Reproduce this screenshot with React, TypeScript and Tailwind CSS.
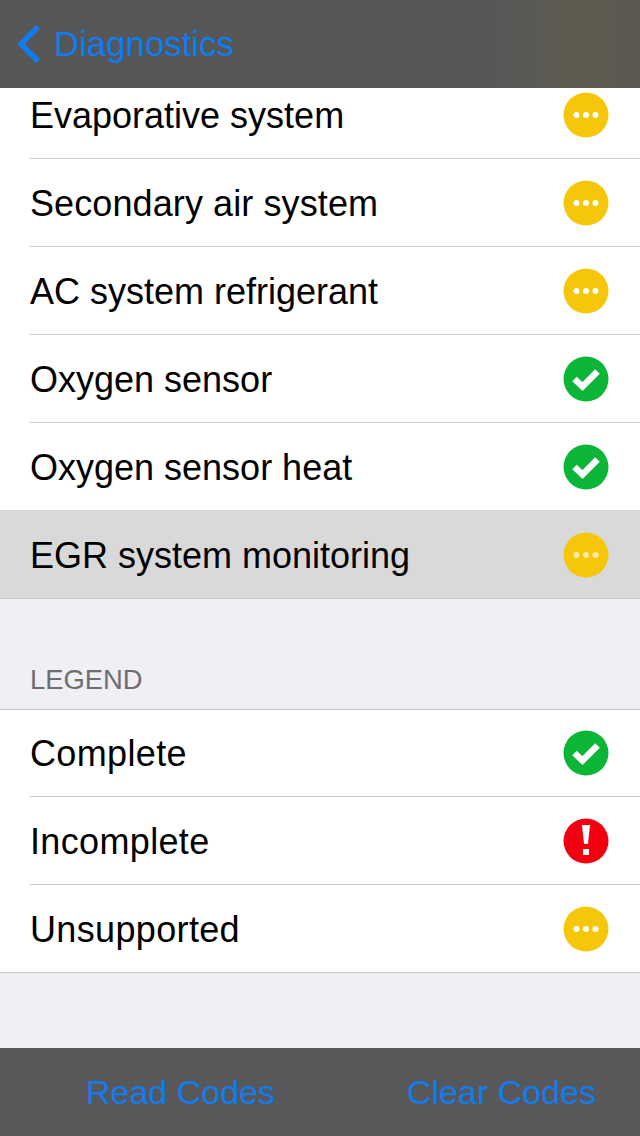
const FONT = "font-['Liberation_Sans',Arial,sans-serif]";

type Status = "complete" | "incomplete" | "unsupported";

function StatusIcon({ status, dim }: { status: Status; dim?: boolean }) {
  if (status === "complete")
    return (
      <svg width="46" height="46" viewBox="0 0 46 46" aria-hidden>
        <circle cx="23" cy="23" r="22.5" fill="#0bb536" />
        <path d="M11.5 23 L19.5 30.5 L34.5 15.5" fill="none" stroke="#fff" strokeWidth="6.5" />
      </svg>
    );
  if (status === "incomplete")
    return (
      <svg width="46" height="46" viewBox="0 0 46 46" aria-hidden>
        <circle cx="23" cy="23" r="22.5" fill="#f2000f" />
        <path d="M19 7 H27 L25 26 H21 Z" fill="#fff" />
        <rect x="20" y="31" width="6" height="6" fill="#fff" />
      </svg>
    );
  return (
    <svg width="46" height="46" viewBox="0 0 46 46" aria-hidden>
      <circle cx="23" cy="23" r="22.5" fill="#f5c60a" />
      <g fill="#fff" opacity={dim ? 0.65 : 1}>
        <circle cx="13.5" cy="23" r="3" />
        <circle cx="23" cy="23" r="3" />
        <circle cx="32.5" cy="23" r="3" />
      </g>
    </svg>
  );
}

function Row({
  label,
  status,
  size,
  tracking = "",
  plain,
  selected,
}: {
  label: string;
  status: Status;
  size: string;
  tracking?: string;
  plain?: boolean;
  selected?: boolean;
}) {
  return (
    <div className={selected ? "bg-[#d9d9d9]" : "bg-white"}>
      <div
        className={`flex items-center justify-between pr-[31px] ${size} ${
          plain ? "pl-[30px]" : "ml-[30px] border-b border-[#c8c7cc]"
        }`}
      >
        <span className={`pt-[2px] text-[36px] leading-none text-black ${tracking}`}>{label}</span>
        <StatusIcon status={status} dim={selected} />
      </div>
    </div>
  );
}

export default function App() {
  return (
    <div className={`flex h-[1136px] w-[640px] flex-col overflow-hidden bg-[#efeff4] ${FONT}`}>
      <div className="flex h-[88px] shrink-0 items-center bg-[linear-gradient(90deg,#575757_0%,#575757_78%,#5d5b4f_90%,#5a5951_100%)] pl-[16px]">
        <svg width="26" height="40" viewBox="0 0 26 40" aria-hidden>
          <path d="M22 3 L5 20 L22 37" fill="none" stroke="#107cf0" strokeWidth="5.5" />
        </svg>
        <span className="ml-[12px] text-[34.8px] leading-none text-[#107cf0]">Diagnostics</span>
      </div>

      <div>
        <Row size="h-[71px] pb-[17px]" label="Evaporative system" status="unsupported" />
        <Row size="h-[88px]" tracking="tracking-[0.1px]" label="Secondary air system" status="unsupported" />
        <Row size="h-[88px]" label="AC system refrigerant" status="unsupported" />
        <Row size="h-[88px]" label="Oxygen sensor" status="complete" />
        <Row size="h-[87px]" plain label="Oxygen sensor heat" status="complete" />
        <Row size="h-[88px] pt-[2px]" plain selected label="EGR system monitoring" status="unsupported" />
      </div>

      <div className="flex h-[112px] shrink-0 items-end border-y border-[#c8c7cc] pb-[16px] pl-[30px] text-[27.4px] leading-none text-[#6d6d72]">
        LEGEND
      </div>

      <div className="border-b border-[#c8c7cc] bg-white">
        <Row size="h-[87px]" tracking="tracking-[0.35px]" label="Complete" status="complete" />
        <Row size="h-[88px]" tracking="tracking-[0.35px]" label="Incomplete" status="incomplete" />
        <Row size="h-[87px]" plain tracking="tracking-[0.35px]" label="Unsupported" status="unsupported" />
      </div>

      <div className="mt-auto flex h-[88px] shrink-0 items-center justify-between bg-[#58585a] pl-[86px] pr-[44px] text-[34px] leading-none text-[#107cf0]">
        <span>Read Codes</span>
        <span>Clear Codes</span>
      </div>
    </div>
  );
}
